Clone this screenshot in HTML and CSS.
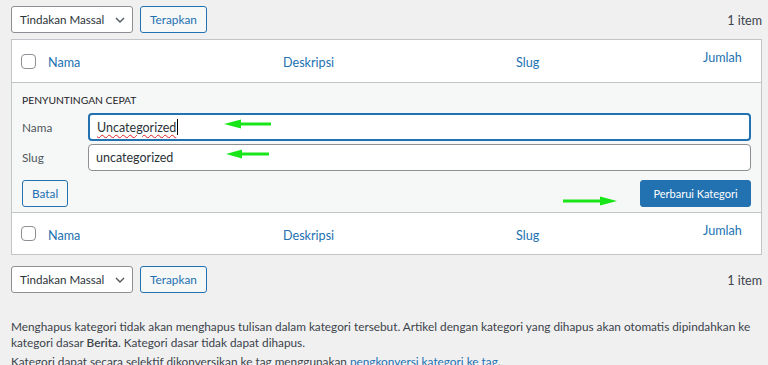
FILE: index.html
```html
<!DOCTYPE html>
<html lang="id">
<head>
<meta charset="utf-8">
<link rel="stylesheet" href="styles.css">
</head>
<body>
<div class="page">
  <div class="tablenav top">
    <div class="actions">
      <div class="select">Tindakan Massal<svg class="chev" viewBox="0 0 10 6" width="10" height="6"><path d="M1 1l4 4 4-4" fill="none" stroke="#50575e" stroke-width="1.4"/></svg></div>
      <button class="btn">Terapkan</button>
    </div>
    <div class="count">1 item</div>
  </div>

  <div class="table">
    <div class="row head">
      <div class="cb"><span class="box"></span></div>
      <div class="col">Nama</div>
      <div class="col">Deskripsi</div>
      <div class="col">Slug</div>
      <div class="col num">Jumlah</div>
    </div>

    <div class="quick">
      <div class="qtitle">PENYUNTINGAN CEPAT</div>
      <div class="field">
        <span class="label">Nama</span>
        <div class="input focus"><span class="spell">Uncategorized</span><span class="caret"></span></div>
        <svg class="arrow a1" viewBox="0 0 48 10" width="48" height="10"><path d="M16 3.5H47v3H16z" fill="#19e619"/><path d="M0 5L17 0.5V9.5z" fill="#19e619"/></svg>
      </div>
      <div class="field">
        <span class="label">Slug</span>
        <div class="input">uncategorized</div>
        <svg class="arrow a2" viewBox="0 0 44 10" width="44" height="10"><path d="M15 3.5H43v3H15z" fill="#19e619"/><path d="M0 5L16 0.5V9.5z" fill="#19e619"/></svg>
      </div>
      <div class="qactions">
        <button class="btn">Batal</button>
        <svg class="arrow a3" viewBox="0 0 54 10" width="54" height="10"><path d="M0 3.5H38v3H0z" fill="#19e619"/><path d="M54 5L37 0.5V9.5z" fill="#19e619"/></svg>
        <button class="btn primary">Perbarui Kategori</button>
      </div>
    </div>

    <div class="row foot">
      <div class="cb"><span class="box"></span></div>
      <div class="col">Nama</div>
      <div class="col">Deskripsi</div>
      <div class="col">Slug</div>
      <div class="col num">Jumlah</div>
    </div>
  </div>

  <div class="tablenav bottom">
    <div class="actions">
      <div class="select">Tindakan Massal<svg class="chev" viewBox="0 0 10 6" width="10" height="6"><path d="M1 1l4 4 4-4" fill="none" stroke="#50575e" stroke-width="1.4"/></svg></div>
      <button class="btn">Terapkan</button>
    </div>
    <div class="count">1 item</div>
  </div>

  <div class="notes">
    <p>Menghapus kategori tidak akan menghapus tulisan dalam kategori tersebut. Artikel dengan kategori yang dihapus akan otomatis dipindahkan ke kategori dasar <strong>Berita</strong>. Kategori dasar tidak dapat dihapus.</p>
    <p>Kategori dapat secara selektif dikonversikan ke tag menggunakan <a href="#">pengkonversi kategori ke tag</a>.</p>
  </div>
</div>
</body>
</html>
```

FILE: styles.css
```css
* { box-sizing: border-box; }
html, body { margin: 0; padding: 0; }
body {
  background: #f0f0f1;
  font-family: Lato, "Noto Sans", sans-serif;
  font-size: 12px;
  color: #3c434a;
  width: 768px;
  height: 365px;
  overflow: hidden;
}
.page { padding: 6px 6px 0 11px; }

.tablenav {
  display: flex;
  justify-content: space-between;
  align-items: center;
  height: 27px;
}
.tablenav.bottom { margin-top: 11px; }
.actions { display: flex; gap: 7px; }
.select {
  width: 122px;
  height: 27px;
  border: 1px solid #8c8f94;
  border-radius: 3px;
  background: #fff;
  color: #2c3338;
  font-size: 11.6px;
  white-space: nowrap;
  display: flex;
  align-items: center;
  justify-content: space-between;
  padding: 0 7px 0 8px;
}
.chev { flex: none; }
.btn {
  font-family: inherit;
  font-size: 11.8px;
  height: 27px;
  padding: 0 9px;
  border: 1px solid #2271b1;
  border-radius: 3px;
  background: #f6f7f7;
  color: #2271b1;
  white-space: nowrap;
  cursor: pointer;
}
.btn.primary {
  background: #2271b1;
  color: #fff;
  width: 111px;
  padding: 0;
  font-size: 11px;
}
.count { color: #3c434a; font-size: 12.5px; padding-top: 2px; }

.table {
  margin-top: 6px;
  background: #fff;
  border: 1px solid #c3c4c7;
}
.row {
  display: grid;
  grid-template-columns: 36px 235px 233px 187px 1fr;
  height: 43px;
  align-items: center;
}
.row.head { border-bottom: 1px solid #c3c4c7; }
.row.foot { border-top: 1px solid #c3c4c7; height: 42px; }
.cb { padding-left: 9px; display: flex; }
.box {
  width: 15px; height: 15px;
  border: 1px solid #8c8f94;
  border-radius: 4px;
  background: #fff;
}
.col { color: #2271b1; font-size: 12.6px; padding-top: 3px; }
.col.num { align-self: start; padding-top: 10px; }

.quick {
  background: #f6f7f7;
  padding: 10px 10px 0 10px;
  height: 129px;
}
.qtitle {
  font-size: 10.3px;
  color: #1d2327;
  height: 20px;
  line-height: 14px;
}
.field {
  position: relative;
  display: flex;
  align-items: center;
  margin-bottom: 3px;
}
.label {
  width: 66px;
  color: #50575e;
  font-size: 11.8px;
}
.input {
  flex: 1;
  height: 27px;
  border: 1px solid #8c8f94;
  border-radius: 4px;
  background: #fff;
  color: #2c3338;
  font-size: 12.5px;
  display: flex;
  align-items: center;
  padding: 0 7px;
}
.input.focus {
  height: 28px;
  border: 2px solid #2271b1;
  border-radius: 4px;
}
.spell { text-decoration: underline wavy #e02020; text-decoration-thickness: 1px; text-underline-offset: 2px; }
.caret { width: 1px; height: 16px; background: #000; margin-left: 1px; }

.arrow { position: absolute; }
.a1 { left: 202px; top: 6px; }
.a2 { left: 204px; top: 5px; }

.qactions {
  position: relative;
  display: flex;
  justify-content: space-between;
  margin-top: 9px;
}
.a3 { left: 541px; top: 16px; }

.notes { margin-top: 26px; font-size: 11.8px; color: #3c434a; }
.notes p { margin: 0 0 3px; line-height: 16px; }
.notes strong { font-weight: 600; }
.notes a { color: #2271b1; }
```
